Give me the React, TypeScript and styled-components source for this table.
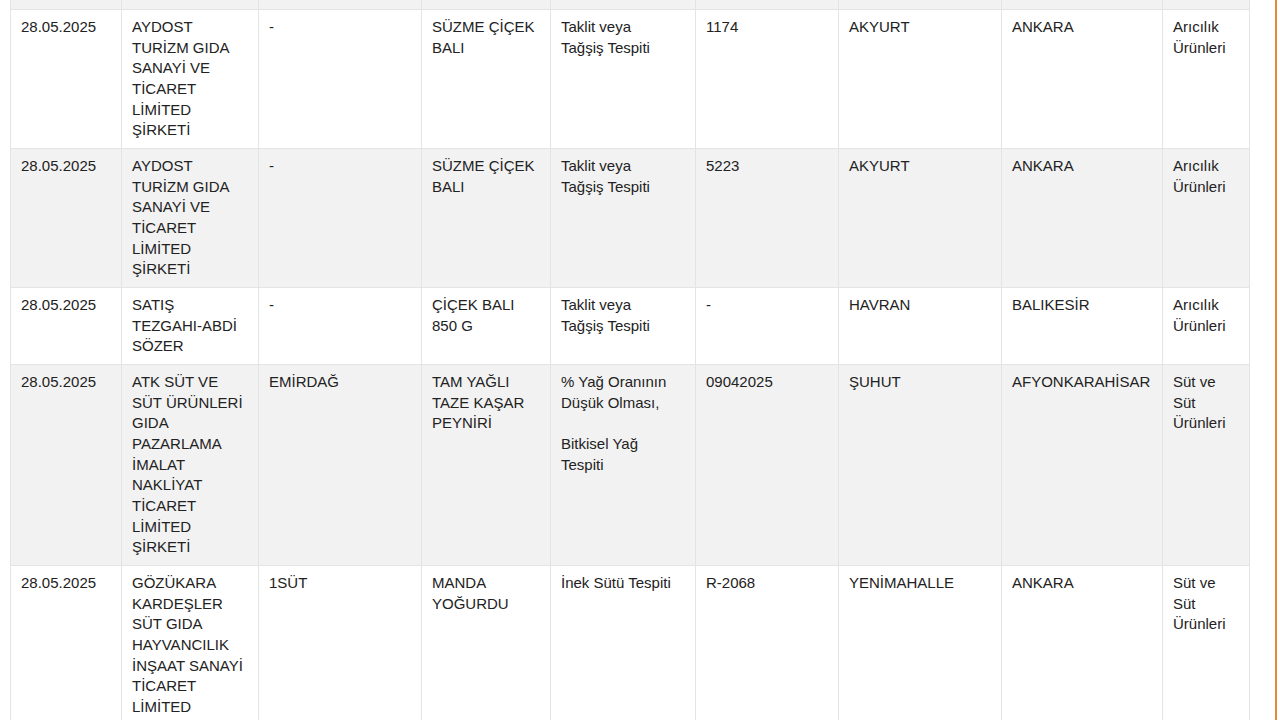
import * as React from 'react';
import styled, { createGlobalStyle } from 'styled-components';

const GlobalStyle = createGlobalStyle`
	html, body {
		margin: 0;
		padding: 0;
		background: #ffffff;
		overflow: hidden;
	}
	body {
		font-family: "Liberation Sans", Arial, sans-serif;
	}
`;

interface IRow {
	date: string;
	company: string[];
	brand: string;
	product: string[];
	finding: string[];
	batch: string;
	district: string;
	city: string;
	group: string[];
}

const rows: IRow[] = [
	{
		date: '28.05.2025',
		company: ['AYDOST', 'TURİZM GIDA', 'SANAYİ VE', 'TİCARET', 'LİMİTED', 'ŞİRKETİ'],
		brand: '-',
		product: ['SÜZME ÇİÇEK', 'BALI'],
		finding: ['Taklit veya', 'Tağşiş Tespiti'],
		batch: '1174',
		district: 'AKYURT',
		city: 'ANKARA',
		group: ['Arıcılık', 'Ürünleri'],
	},
	{
		date: '28.05.2025',
		company: ['AYDOST', 'TURİZM GIDA', 'SANAYİ VE', 'TİCARET', 'LİMİTED', 'ŞİRKETİ'],
		brand: '-',
		product: ['SÜZME ÇİÇEK', 'BALI'],
		finding: ['Taklit veya', 'Tağşiş Tespiti'],
		batch: '5223',
		district: 'AKYURT',
		city: 'ANKARA',
		group: ['Arıcılık', 'Ürünleri'],
	},
	{
		date: '28.05.2025',
		company: ['SATIŞ', 'TEZGAHI-ABDİ', 'SÖZER'],
		brand: '-',
		product: ['ÇİÇEK BALI', '850 G'],
		finding: ['Taklit veya', 'Tağşiş Tespiti'],
		batch: '-',
		district: 'HAVRAN',
		city: 'BALIKESİR',
		group: ['Arıcılık', 'Ürünleri'],
	},
	{
		date: '28.05.2025',
		company: ['ATK SÜT VE', 'SÜT ÜRÜNLERİ', 'GIDA', 'PAZARLAMA', 'İMALAT', 'NAKLİYAT', 'TİCARET', 'LİMİTED', 'ŞİRKETİ'],
		brand: 'EMİRDAĞ',
		product: ['TAM YAĞLI', 'TAZE KAŞAR', 'PEYNİRİ'],
		finding: ['% Yağ Oranının', 'Düşük Olması,', '', 'Bitkisel Yağ', 'Tespiti'],
		batch: '09042025',
		district: 'ŞUHUT',
		city: 'AFYONKARAHİSAR',
		group: ['Süt ve', 'Süt', 'Ürünleri'],
	},
	{
		date: '28.05.2025',
		company: ['GÖZÜKARA', 'KARDEŞLER', 'SÜT GIDA', 'HAYVANCILIK', 'İNŞAAT SANAYİ', 'TİCARET', 'LİMİTED', 'ŞİRKETİ'],
		brand: '1SÜT',
		product: ['MANDA', 'YOĞURDU'],
		finding: ['İnek Sütü Tespiti'],
		batch: 'R-2068',
		district: 'YENİMAHALLE',
		city: 'ANKARA',
		group: ['Süt ve', 'Süt', 'Ürünleri'],
	},
];

const colWidths = [111, 137, 163, 129, 145, 143, 163, 161, 87];

const Frame = styled.div`
	width: 1275px;
	height: 720px;
	overflow: hidden;
	border-right: 2px solid #e5893d;
	box-sizing: content-box;
`;

const Table = styled.table`
	margin-left: 10px;
	width: 1239px;
	table-layout: fixed;
	border-collapse: collapse;
	color: #222222;
	font-size: 15px;
	line-height: 20.67px;
`;

const Row = styled.tr<{ $shaded?: boolean }>`
	background-color: ${props => props.$shaded ? '#f2f2f2' : '#ffffff'};
`;

const Cell = styled.td`
	vertical-align: top;
	padding: 7px 10px;
	border: 1px solid #e4e4e4;
	white-space: nowrap;
`;

const StubCell = styled.td`
	height: 9px;
	padding: 0;
	border: 1px solid #e4e4e4;
	border-top: none;
`;

const Lines = ({ items }: { items: string[] }) => (
	<>
		{items.map((line, i) => (
			<React.Fragment key={i}>
				{i > 0 && <br />}
				{line}
			</React.Fragment>
		))}
	</>
);

export default function App() {
	return (
		<>
			<GlobalStyle />
			<Frame>
				<Table>
					<colgroup>
						{colWidths.map((w, i) => <col key={i} style={{ width: w }} />)}
					</colgroup>
					<tbody>
						<Row $shaded>
							{colWidths.map((_, i) => <StubCell key={i} />)}
						</Row>
						{rows.map((r, i) => (
							<Row key={i} $shaded={i % 2 === 1}>
								<Cell>{r.date}</Cell>
								<Cell><Lines items={r.company} /></Cell>
								<Cell>{r.brand}</Cell>
								<Cell><Lines items={r.product} /></Cell>
								<Cell><Lines items={r.finding} /></Cell>
								<Cell>{r.batch}</Cell>
								<Cell>{r.district}</Cell>
								<Cell>{r.city}</Cell>
								<Cell><Lines items={r.group} /></Cell>
							</Row>
						))}
					</tbody>
				</Table>
			</Frame>
		</>
	);
}
